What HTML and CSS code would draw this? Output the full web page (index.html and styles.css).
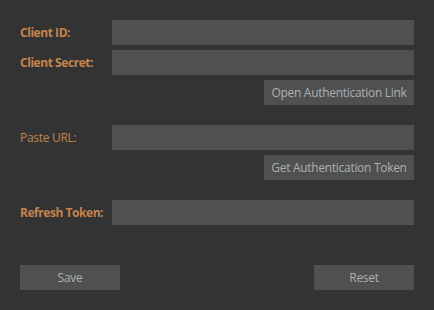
FILE: index.html
```html
<!DOCTYPE html>
<html lang="en">
<head>
    <meta charset="UTF-8">
    <meta name="viewport" content="width=device-width, initial-scale=1.0">
    <title>Authentication</title>
    <link rel="stylesheet" href="styles.css">
</head>
<body>
    <div class="panel">
        <div class="field">
            <label class="label bold" for="client-id">Client ID:</label>
            <input type="text" id="client-id">
        </div>
        <div class="field">
            <label class="label bold" for="client-secret">Client Secret:</label>
            <input type="text" id="client-secret">
        </div>
        <div class="action">
            <button class="wide">Open Authentication Link</button>
        </div>

        <div class="field section">
            <label class="label" for="paste-url">Paste URL:</label>
            <input type="text" id="paste-url">
        </div>
        <div class="action">
            <button class="wide">Get Authentication Token</button>
        </div>

        <div class="field section">
            <label class="label bold" for="refresh-token">Refresh Token:</label>
            <input type="text" id="refresh-token">
        </div>

        <div class="footer">
            <button class="small">Save</button>
            <button class="small">Reset</button>
        </div>
    </div>
</body>
</html>
```

FILE: styles.css
```css
body {
    margin: 0;
    padding: 20px;
    background-color: #333333;
    font-family: "Open Sans", "Noto Sans", sans-serif;
    font-size: 12px;
}

.panel {
    display: flex;
    flex-direction: column;
    gap: 5px;
}

.field {
    display: flex;
    align-items: center;
    height: 25px;
}

.section {
    margin-top: 15px;
}

.label {
    width: 92px;
    flex: none;
    color: #c5844c;
    letter-spacing: -0.3px;
}

.label.bold {
    font-weight: bold;
    letter-spacing: -0.45px;
}

input {
    flex: 1;
    height: 25px;
    box-sizing: border-box;
    margin: 0;
    border: none;
    background-color: #505050;
    color: #ddd;
    outline: none;
}

.action {
    display: flex;
    justify-content: flex-end;
}

button {
    height: 25px;
    margin: 0;
    padding: 0;
    border: none;
    background-color: #505050;
    color: #a9b0b4;
    font-family: inherit;
    font-size: 12px;
    letter-spacing: -0.3px;
    cursor: pointer;
}

button.wide {
    width: 150px;
}

button.small {
    width: 100px;
}

.footer {
    display: flex;
    justify-content: space-between;
    margin-top: 35px;
}
```
